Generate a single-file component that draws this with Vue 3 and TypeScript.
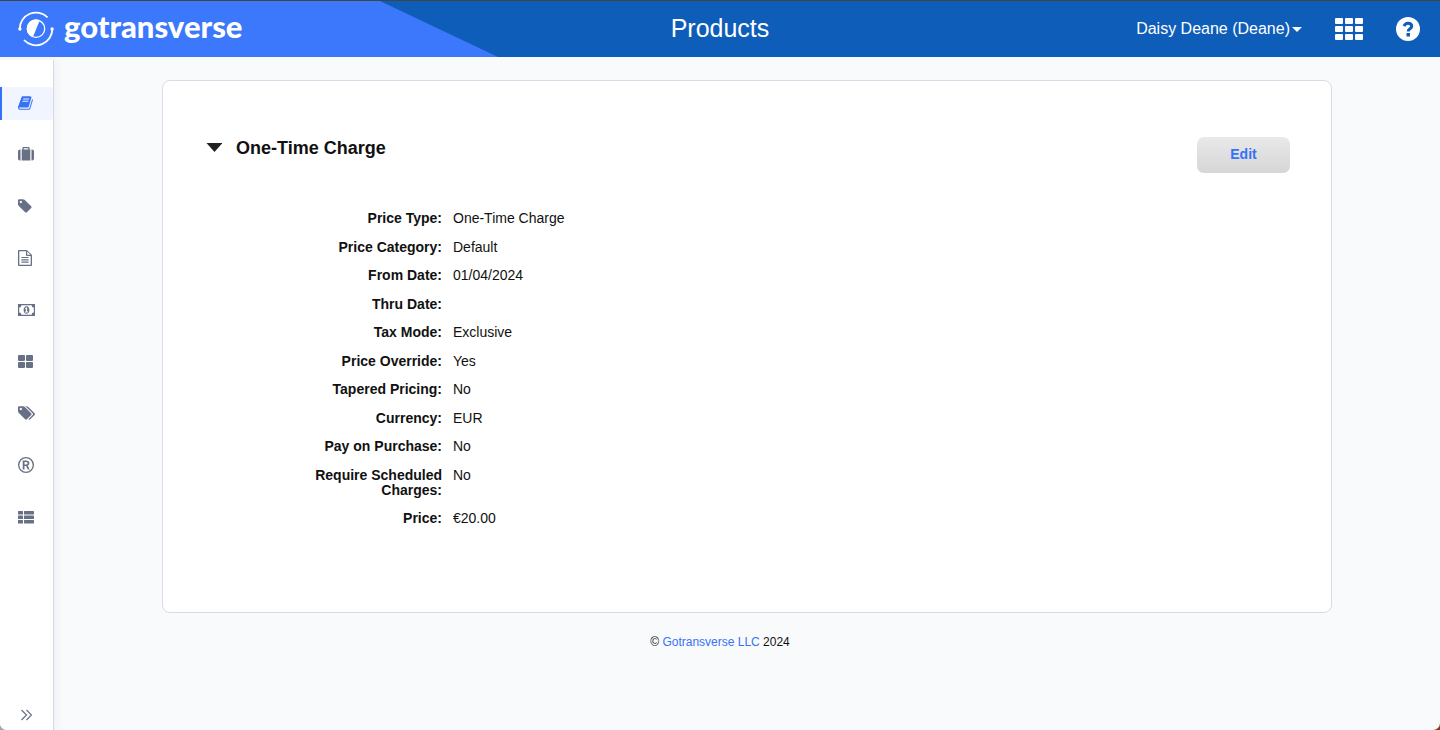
<script setup lang="ts">
import { ref } from 'vue'

interface NavItem {
  label: string
  width: number
  box: string
  path: string
}

interface Field {
  label: string
  value: string
}

const tagPath =
  'M576 448q0-53-37.500-90.500t-90.500-37.500-90.500 37.500-37.500 90.500 37.500 90.500 90.500 37.500 90.500-37.500 37.500-90.500zm1067 576q0 53-37 90l-491 492q-39 37-91 37-53 0-90-37l-715-716q-38-37-64.500-101t-26.500-117v-416q0-52 38-90t90-38h416q53 0 117 26.500t102 64.500l715 714q37 39 37 91z'

const navItems: NavItem[] = [
  {
    label: 'Products',
    width: 16,
    box: '0 0 1792 1792',
    path: 'M1639 478q40 57 18 129l-275 906q-19 64-76.500 107.500t-122.500 43.500h-923q-77 0-148.500-53.500t-99.500-131.500q-24-67-2-127 0-4 3-27t4-37q1-8-3-21.500t-3-19.500q2-11 8-21t16.500-23.500 16.500-23.500q23-38 45-91.500t30-91.500q3-10 .5-30t-.5-28q3-11 17-28t17-23q21-36 42-92t25-90q1-9-2.500-32t.5-28q4-13 22-30.500t22-22.500q19-26 42.500-84.500t27.500-96.500q1-8-3-25.500t-2-26.500q2-8 9-18t18-23 17-21q8-12 16.500-30.500t15-35 16-36 19.500-32 26.500-23.500 36-11.500 47.500 5.500l-1 3q38-9 51-9h761q74 0 114 56t18 130l-274 906q-36 119-71.500 153.500t-128.500 34.500h-869q-27 0-38 15-11 16-1 43 24 70 144 70h923q29 0 56-15.500t35-41.500l300-987q7-22 5-57 38 15 59 43zm-1064 2q-4 13 2 22.500t20 9.500h608q13 0 25.500-9.500t16.500-22.500l21-64q4-13-2-22.500t-20-9.500h-608q-13 0-25.500 9.500t-16.500 22.500zm-83 256q-4 13 2 22.500t20 9.500h608q13 0 25.500-9.500t16.500-22.500l21-64q4-13-2-22.500t-20-9.500h-608q-13 0-25.500 9.500t-16.500 22.500z',
  },
  {
    label: 'Packages',
    width: 16,
    box: '0 0 16 16',
    path: 'M5.700 3.500h4.600V2.300H5.700zM3.700 3.500v11h8.600v-11h-.7V2.200Q11.600 1.100 10.600 1.100H5.400Q4.400 1.100 4.400 2.200v1.300zM2.500 3.500v11H1.900Q0 14.500 0 12.600V5.400Q0 3.500 1.900 3.500zM16 5.400v7.200q0 1.900-1.900 1.900h-.6v-11h.6Q16 3.500 16 5.400z',
  },
  { label: 'Price tags', width: 16, box: '128 0 1792 1792', path: tagPath },
  {
    label: 'Documents',
    width: 14,
    box: '0 0 14 16',
    path: 'M9.400.4 13.500 4.500Q14 5 14 5.600V15.100Q14 16 13.100 16H.9Q0 16 0 15.100V.9Q0 0 .9 0H8.400Q9 0 9.400.4zM9.200 1.500V4.700H12.400zM12.700 14.700V6H8.900Q8 6 8 5.100V1.300H1.300V14.700zM3.400 7h7.200V8.100H3.400zM3.400 9.300h7.200v1.100H3.400zM3.400 11.600h7.200v1.100H3.400z',
  },
  {
    label: 'Payments',
    width: 17,
    box: '0 0 17 16',
    path: 'M0 2h17v12H0zM3.400 3.200Q3.400 5.500 1.200 5.500v5Q3.400 10.500 3.400 12.800h10.200Q13.600 10.500 15.800 10.500v-5Q13.600 5.500 13.600 3.200zM8.500 4.200C10.300 4.200 11.400 6 11.400 8s-1.100 3.800-2.900 3.800S5.600 10 5.600 8 6.700 4.200 8.500 4.200zM8 5.500 6.900 6.500l.6.700.4-.3V9.600H7v.9h3v-.9h-.9V5.500z',
  },
  {
    label: 'Dashboard',
    width: 15,
    box: '0 0 15 16',
    path: 'M1 2h5q1 0 1 1v4q0 1-1 1H1Q0 8 0 7V3Q0 2 1 2zM9 2h5q1 0 1 1v4q0 1-1 1H9Q8 8 8 7V3Q8 2 9 2zM1 9h5q1 0 1 1v4q0 1-1 1H1q-1 0-1-1v-4Q0 9 1 9zM9 9h5q1 0 1 1v4q0 1-1 1H9q-1 0-1-1v-4Q8 9 9 9z',
  },
  {
    label: 'Tag groups',
    width: 18,
    box: '128 0 2016 1792',
    path:
      tagPath +
      'm384 0q0 53-37 90l-491 492q-39 37-91 37-36 0-59-14t-53-45l470-470q37-37 37-90 0-52-37-91l-715-714q-38-38-102-64.500t-117-26.500h224q53 0 117 26.500t102 64.500l715 714q37 39 37 91z',
  },
  {
    label: 'Registrations',
    width: 16,
    box: '0 0 16 16',
    path: 'M8 0a8 8 0 1 1 0 16A8 8 0 1 1 8 0zM8 1.350a6.650 6.650 0 1 0 0 13.300A6.650 6.650 0 1 0 8 1.350zM4.700 3.600h3.500q3.200 0 3.200 2.700 0 1.700-1.600 2.300l1.900 3.800H9.800L8.100 9H6.500v3.400H4.700zM6.500 5.100v2.500h1.600q1.500 0 1.500-1.250T8.100 5.100z',
  },
  {
    label: 'Lists',
    width: 16,
    box: '0 0 16 16',
    path: 'M.6 2h3.800q.6 0 .6.600v2.300q0 .6-.6.600H.6Q0 5.500 0 4.900V2.600Q0 2 .6 2zM6.600 2h8.800q.6 0 .6.600v2.300q0 .6-.6.600H6.600Q6 5.500 6 4.900V2.600Q6 2 6.600 2zM.6 6.500h3.800q.6 0 .6.600v2.300q0 .6-.6.600H.6Q0 10 0 9.400V7.100q0-.6.600-.6zM6.600 6.500h8.800q.6 0 .6.600v2.300q0 .6-.6.600H6.600Q6 10 6 9.400V7.100q0-.6.600-.6zM.6 11h3.800q.6 0 .6.600v2.300q0 .6-.6.600H.6q-.6 0-.6-.6v-2.300Q0 11 .6 11zM6.600 11h8.800q.6 0 .6.600v2.300q0 .6-.6.600H6.600q-.6 0-.6-.6v-2.300q0-.6.600-.6z',
  },
]

const fields: Field[] = [
  { label: 'Price Type:', value: 'One-Time Charge' },
  { label: 'Price Category:', value: 'Default' },
  { label: 'From Date:', value: '01/04/2024' },
  { label: 'Thru Date:', value: '' },
  { label: 'Tax Mode:', value: 'Exclusive' },
  { label: 'Price Override:', value: 'Yes' },
  { label: 'Tapered Pricing:', value: 'No' },
  { label: 'Currency:', value: 'EUR' },
  { label: 'Pay on Purchase:', value: 'No' },
  { label: 'Require Scheduled Charges:', value: 'No' },
  { label: 'Price:', value: '€20.00' },
]

const active = ref('Products')
const open = ref(true)
</script>

<template>
  <div class="page">
    <header class="topbar">
      <div class="brand-area">
        <a class="brand" href="#">
          <svg class="brand-mark" width="36" height="36" viewBox="0 0 36 36" aria-hidden="true">
            <g fill="none" stroke="#fff" stroke-width="1.800">
              <path d="M1.700 17.700A16.300 16.300 0 0 1 29.600 6.400" />
              <path d="M34.300 17.700A16.300 16.300 0 0 1 6 29" />
              <circle cx="18" cy="17.700" r="8.700" stroke-width="1.300" />
            </g>
            <circle cx="1.900" cy="18" r="1.700" fill="#fff" />
            <circle cx="34.100" cy="18" r="1.700" fill="#fff" />
            <path d="M21.800 9.300A9.200 9.200 0 1 0 14.800 26.300z" fill="#fff" />
          </svg>
          <span class="brand-name">gotransverse</span>
        </a>
      </div>
      <h1 class="title">Products</h1>
      <div class="tools">
        <button class="user" type="button">
          Daisy Deane (Deane)
          <svg width="10" height="5" viewBox="0 0 10 5" aria-hidden="true"><path d="M0 0h10L5 5z" fill="#fff" /></svg>
        </button>
        <button class="tool" type="button" aria-label="Applications">
          <svg width="28" height="22" viewBox="0 0 28 22" fill="#fff" aria-hidden="true">
            <g v-for="row in 3" :key="row">
              <rect v-for="col in 3" :key="col" :x="(col - 1) * 10" :y="(row - 1) * 8" width="8" height="6" rx="1" />
            </g>
          </svg>
        </button>
        <button class="tool" type="button" aria-label="Help">
          <svg width="24" height="24" viewBox="0 0 24 24" aria-hidden="true">
            <circle cx="12" cy="12" r="12" fill="#fff" />
            <path d="M8 9.200Q9.300 6.300 12 6.300c2.300 0 3.700 1.300 3.700 3 0 2.500-3.500 2.500-3.500 5.200" fill="none" stroke="#0e5db8" stroke-width="3" />
            <rect x="10.500" y="16" width="3.500" height="3.500" fill="#0e5db8" />
          </svg>
        </button>
      </div>
    </header>

    <div class="layout">
      <nav class="sidebar" aria-label="Main">
        <ul class="nav-list">
          <li v-for="item in navItems" :key="item.label">
            <a
              href="#"
              class="nav-link"
              :class="{ active: active === item.label }"
              :aria-label="item.label"
              @click.prevent="active = item.label"
            >
              <svg :width="item.width" height="16" :viewBox="item.box" fill="currentColor" fill-rule="evenodd" aria-hidden="true">
                <path :d="item.path" />
              </svg>
            </a>
          </li>
        </ul>
        <button class="expand" type="button" aria-label="Expand menu">
          <svg width="12" height="12" viewBox="0 0 12 12" fill="none" stroke="currentColor" stroke-width="1.200" aria-hidden="true">
            <path d="M1.500 1l5 5-5 5M6.500 1l5 5-5 5" />
          </svg>
        </button>
      </nav>

      <main class="content">
        <section class="card">
          <div class="card-head">
            <h2>
              <button class="toggle" type="button" :aria-expanded="open" @click="open = !open">
                <svg width="16" height="10" viewBox="0 0 16 10" aria-hidden="true"><path d="M.5 0h16l-8 9z" fill="#222" /></svg>
                One-Time Charge
              </button>
            </h2>
            <button class="edit" type="button">Edit</button>
          </div>
          <dl v-show="open" class="fields">
            <div v-for="field in fields" :key="field.label" class="field">
              <dt>{{ field.label }}</dt>
              <dd>{{ field.value }}</dd>
            </div>
          </dl>
        </section>
      </main>

      <footer class="footer">© <a href="#">Gotransverse LLC</a> 2024</footer>
    </div>
  </div>
</template>

<style>
body {
  margin: 0;
  background: linear-gradient(90deg, #a8a8a8 50%, #8c3a1c 50%);
}
</style>

<style scoped>
.page {
  display: flex;
  flex-direction: column;
  min-height: 100vh;
  border-radius: 0 0 7px 7px;
  background: #f9fafc;
  font-family: 'Liberation Sans', Arial, sans-serif;
  font-size: 14px;
  color: #111;
}

button {
  margin: 0;
  padding: 0;
  border: 0;
  background: none;
  color: inherit;
  font: inherit;
  cursor: pointer;
}

a {
  color: #3672f8;
  text-decoration: none;
}

.topbar {
  display: grid;
  grid-template-columns: 1fr auto 1fr;
  align-items: center;
  box-sizing: border-box;
  height: 57px;
  border-top: 1px solid #444;
  background: #0e5db8;
  color: #fff;
}

.brand-area {
  display: flex;
  align-items: center;
  align-self: stretch;
  width: 498px;
  background: #3c78fb;
  clip-path: polygon(0 0, 380px 0, 100% 100%, 0 100%);
}

.brand {
  display: flex;
  align-items: center;
  gap: 10px;
  padding-left: 18px;
  color: #fff;
}

.brand-name {
  padding-bottom: 6px;
  font-family: Lato, sans-serif;
  font-size: 31px;
  font-weight: 900;
  line-height: 32px;
}

.title {
  margin: 0;
  padding-bottom: 2px;
  font-size: 25px;
  font-weight: 400;
  line-height: 28px;
}

.tools {
  display: flex;
  align-items: center;
  justify-content: flex-end;
  gap: 33px;
  padding-right: 20px;
}

.user {
  display: flex;
  align-items: center;
  gap: 2px;
  font-size: 16px;
}

.tool {
  display: flex;
}

.layout {
  flex: 1;
  display: grid;
  grid-template-columns: 54px 1fr;
  grid-template-rows: auto 1fr;
}

.sidebar {
  grid-area: 1 / 1 / 3 / 2;
  display: flex;
  flex-direction: column;
  justify-content: space-between;
  box-sizing: border-box;
  margin-top: 3px;
  padding: 27px 0 9px;
  border-right: 1px solid #d5d9e3;
  border-bottom-left-radius: 7px;
  background: #fff;
  box-shadow: 2px 0 8px rgba(40, 60, 110, 0.06);
  color: #677084;
}

.nav-list {
  display: flex;
  flex-direction: column;
  justify-content: space-between;
  min-height: 447px;
  margin: 0;
  padding: 0;
  list-style: none;
}

.nav-link {
  display: flex;
  align-items: center;
  box-sizing: border-box;
  height: 33px;
  padding: 0 0 2px 16px;
  border-left: 2px solid transparent;
  color: inherit;
}

.nav-link.active {
  border-left-color: #3672f8;
  border-radius: 0 3px 3px 0;
  background: #f0f5ff;
  color: #3672f8;
}

.expand {
  display: flex;
  padding-left: 20px;
}

.content {
  padding: 23px 24px 0;
}

.card {
  box-sizing: border-box;
  max-width: 1170px;
  min-height: 533px;
  margin: 0 auto;
  padding: 56px 41px 80px 43px;
  border: 1px solid #d8dce6;
  border-radius: 8px;
  background: #fff;
}

.card-head {
  display: flex;
  justify-content: space-between;
  align-items: flex-start;
}

.card-head h2 {
  margin: 0;
  font-size: 18px;
  line-height: 22px;
}

.toggle {
  display: flex;
  align-items: center;
  gap: 14px;
}

.edit {
  width: 93px;
  height: 36px;
  padding-bottom: 2px;
  border-radius: 7px;
  background: linear-gradient(#e9e9e9, #d6d6d6);
  color: #3672f8;
  font-weight: 700;
}

.fields {
  display: flex;
  flex-direction: column;
  justify-content: space-between;
  min-height: 315px;
  margin: 38px 0 0;
  line-height: 15px;
}

.field {
  display: grid;
  grid-template-columns: 236px 1fr;
  gap: 11px;
}

.field dt {
  padding-left: 100px;
  font-weight: 700;
  text-align: right;
}

.field dd {
  margin: 0;
}

.footer {
  grid-area: 2 / 1 / 3 / 3;
  padding-top: 21px;
  font-size: 12px;
  line-height: 16px;
  text-align: center;
}
</style>
